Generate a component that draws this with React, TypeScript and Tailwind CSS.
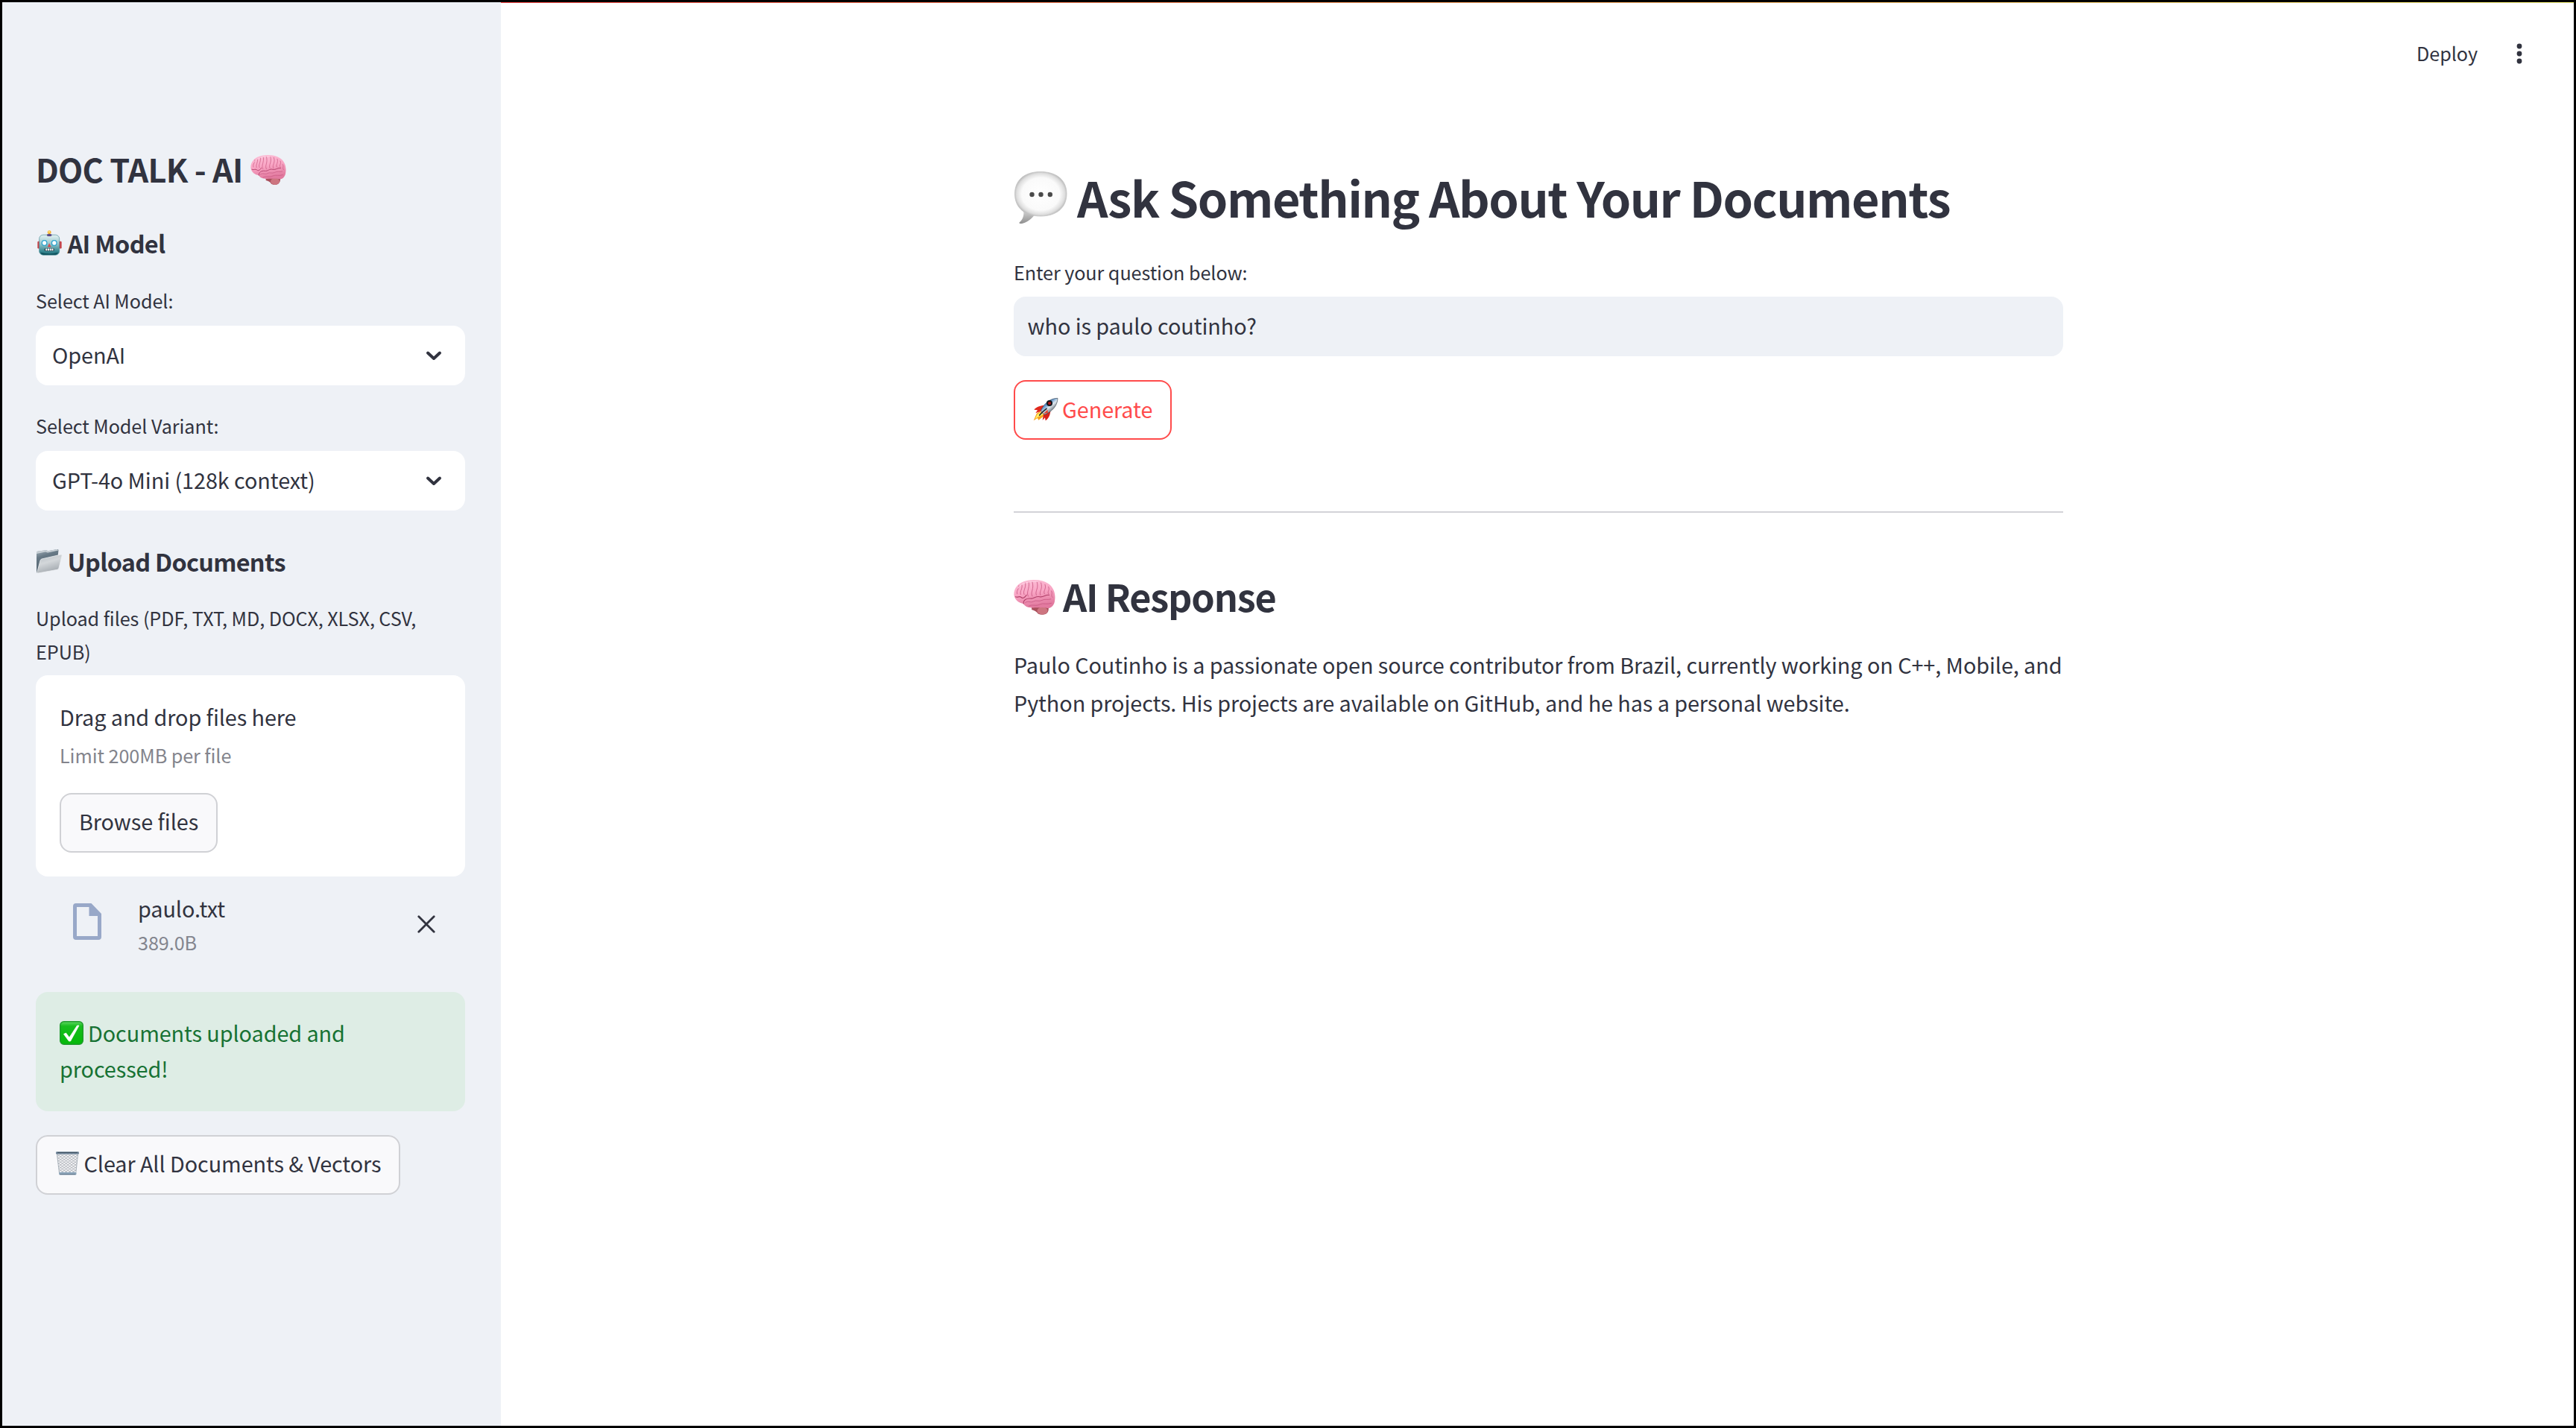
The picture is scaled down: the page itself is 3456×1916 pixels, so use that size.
import React from "react";

function Brain({ id, className }: { id: string; className: string }) {
  return (
    <svg viewBox="48 54 144 120" preserveAspectRatio="none" className={className}>
      <defs>
        <linearGradient id={id} x1="0" y1="0" x2="0.25" y2="1">
          <stop offset="0" stopColor="#fcc0d8" />
          <stop offset="0.5" stopColor="#f9a6c5" />
          <stop offset="1" stopColor="#e27a9f" />
        </linearGradient>
      </defs>
      <path d="M110 146 Q140 142 168 148 Q170 163 160 170 Q146 177 132 170 Q126 160 110 156Z" fill="#a94f5c" />
      <ellipse cx="147" cy="160" rx="18" ry="13" fill="#cd7580" />
      <path
        d="M49 106 C48 84 62 66 84 59 C108 51 146 52 166 66 C184 77 193 98 190 122 C189 140 178 152 164 151 C150 146 136 150 122 149 C106 151 88 149 82 136 C66 134 52 124 49 106Z"
        fill={`url(#${id})`}
      />
      <g fill="none" stroke="#b04069" strokeWidth="2.8" strokeLinecap="round" strokeLinejoin="round">
        <path d="M82 136 C80 124 92 116 106 118 C118 120 124 108 138 112 C150 115 158 104 170 106" />
        <path d="M54 112 C62 116 68 108 74 114 C80 120 88 112 92 106" />
      </g>
      <g fill="none" stroke="#c95a84" strokeWidth="2.2" strokeLinecap="round" strokeLinejoin="round">
        <path d="M88 132 C98 124 106 134 116 128 C126 122 134 130 146 124 C156 118 164 124 176 120" />
        <path d="M100 144 C112 136 124 146 138 138 C150 132 162 140 178 134" />
        <path d="M60 102 C56 88 68 86 66 74" />
        <path d="M72 104 C68 92 80 84 76 70" />
        <path d="M84 104 C78 92 92 82 88 64" />
        <path d="M98 110 C90 96 104 84 100 62" />
        <path d="M112 110 C104 94 120 88 112 60" />
        <path d="M126 106 C120 92 136 84 128 60" />
        <path d="M140 106 C134 94 150 86 142 64" />
        <path d="M154 102 C148 92 162 86 156 70" />
        <path d="M168 102 C162 94 174 90 168 78" />
        <path d="M182 114 C174 106 184 102 178 92" />
      </g>
      <path d="M64 82 C72 66 100 58 130 60" fill="none" stroke="#ffdbe9" strokeWidth="3" strokeLinecap="round" opacity="0.7" />
    </svg>
  );
}

function Robot() {
  return (
    <svg viewBox="17 24 100 102" className="h-[34px] w-[33px]">
      <defs>
        <linearGradient id="head" x1="0" y1="0" x2="0" y2="1">
          <stop offset="0" stopColor="#e4f1f2" />
          <stop offset="0.4" stopColor="#a0cbd0" />
          <stop offset="0.8" stopColor="#3a8a94" />
          <stop offset="1" stopColor="#1d6b76" />
        </linearGradient>
      </defs>
      <rect x="18" y="68" width="12" height="30" rx="4" fill="#c8434a" />
      <rect x="104" y="68" width="12" height="30" rx="4" fill="#c8434a" />
      <circle cx="66" cy="32" r="7.5" fill="#f9b32c" />
      <circle cx="65" cy="30" r="3.5" fill="#ffe680" />
      <rect x="25" y="42" width="82" height="82" rx="16" fill="url(#head)" stroke="#4b8c95" strokeWidth="2" />
      <ellipse cx="66" cy="43" rx="10" ry="5" fill="#5b4a86" />
      <path d="M31 114 Q66 124 101 114 Q98 123 88 123 H44 Q34 123 31 114Z" fill="#0f515c" />
      <circle cx="46" cy="75" r="12" fill="#2ba5cf" />
      <circle cx="86" cy="75" r="12" fill="#2ba5cf" />
      <circle cx="46" cy="75" r="8" fill="#fff" />
      <circle cx="86" cy="75" r="8" fill="#fff" />
      <path d="M66 76 L73 92 H59Z" fill="#d9484c" />
      <rect x="46" y="96" width="40" height="12" rx="5" fill="#2b4a55" />
      <path d="M51 102 H82" stroke="#fff" strokeWidth="8" strokeDasharray="6 2.3" />
    </svg>
  );
}

function Folder() {
  return (
    <svg viewBox="0 0 36 34" className="h-[34px] w-[36px]">
      <defs>
        <linearGradient id="fback" x1="0" y1="0" x2="0.3" y2="1">
          <stop offset="0" stopColor="#aab6bf" />
          <stop offset="0.35" stopColor="#677986" />
          <stop offset="1" stopColor="#4f606c" />
        </linearGradient>
        <linearGradient id="ffront" x1="0" y1="0" x2="0.4" y2="1">
          <stop offset="0" stopColor="#b4bbc1" />
          <stop offset="0.5" stopColor="#d3d7da" />
          <stop offset="1" stopColor="#a5abb1" />
        </linearGradient>
      </defs>
      <path d="M1 5 L1 31 Q1 33 3 32.5 L28 26 L30.5 2 Q30 0.5 28.5 1 L16.500 3.300 L14 2.200 L3 3.500 Q1 4 1 5Z" fill="url(#fback)" />
      <path d="M1 5 Q1 4 3 3.500 L14 2.200 L16.500 3.300 L28.500 1 L30.300 2.500 L16 5.500 L13 4.500 L1 7Z" fill="#c6ced4" />
      <path d="M8 14 L34 8 Q35.500 8 35 10 L31 26 Q30.500 28 29 28.300 L3 33 Q1.500 33 2 31 L6 16 Q6.500 14.500 8 14Z" fill="url(#ffront)" stroke="#edf0f2" strokeWidth="0.8" />
    </svg>
  );
}

function Bubble() {
  return (
    <svg viewBox="0 0 72 72" className="mt-[2px] h-[72px] w-[72px]">
      <defs>
        <radialGradient id="bub" cx="0.5" cy="0.5" r="0.54">
          <stop offset="0" stopColor="#ffffff" />
          <stop offset="0.68" stopColor="#fafafa" />
          <stop offset="0.86" stopColor="#dedede" />
          <stop offset="1" stopColor="#a8a8a8" />
        </radialGradient>
        <linearGradient id="tail" x1="0" y1="0" x2="0" y2="1">
          <stop offset="0" stopColor="#e0e0e0" />
          <stop offset="1" stopColor="#8f8f8f" />
        </linearGradient>
      </defs>
      <path d="M12 50 C15 58 13 65 7.500 69.500 C7 71 9 71.300 11 71 C18 69.500 24 65 29 58Z" fill="url(#tail)" />
      <path d="M36 1.500 C58 1.500 71 13 71 31 C71 50 57 61 36 61 C15 61 1.500 50 1.500 31 C1.500 13 14 1.500 36 1.500Z" fill="url(#bub)" stroke="#c4c4c4" strokeWidth="0.8" />
      <circle cx="24.500" cy="32" r="3.200" fill="#4a4a4a" />
      <circle cx="36.500" cy="32" r="3.200" fill="#4a4a4a" />
      <circle cx="48.800" cy="32" r="3.200" fill="#4a4a4a" />
    </svg>
  );
}

function Rocket() {
  return (
    <svg viewBox="28 22 102 96" className="h-[32px] w-[34px]">
      <defs>
        <linearGradient id="hull" x1="0.2" y1="0.1" x2="0.75" y2="0.75">
          <stop offset="0" stopColor="#2e5f9c" />
          <stop offset="0.35" stopColor="#5d94cc" />
          <stop offset="0.62" stopColor="#dfe7ee" />
          <stop offset="1" stopColor="#5d6670" />
        </linearGradient>
      </defs>
      <path d="M56 78 L42 88 L30 116 L46 106 L50 114 L76 94Z" fill="#f7a21b" />
      <path d="M56 82 L44 92 L36 110 L50 100 L70 92Z" fill="#fff06a" />
      <path d="M72 54 C56 56 42 60 32 72 L46 74 L38 86 L60 78Z" fill="#e1281c" />
      <path d="M98 78 C96 94 92 106 78 116 L76 104 L66 114 L70 90Z" fill="#d8231a" />
      <path d="M127 26 C100 26 76 42 60 74 C62 82 68 90 76 92 C106 78 126 56 127 26Z" fill="url(#hull)" stroke="#3d4854" strokeWidth="2" />
      <path d="M82 68 C72 76 62 84 54 94" stroke="#23272c" strokeWidth="5" strokeLinecap="round" fill="none" />
      <path d="M86 72 L70 88 L88 84Z" fill="#e9402c" />
      <circle cx="94" cy="46" r="12" fill="#14181d" />
      <circle cx="94" cy="46" r="6" fill="#b61717" />
    </svg>
  );
}

function CheckBadge() {
  return (
    <svg viewBox="0 0 32 32" className="h-[32px] w-[32px]">
      <defs>
        <linearGradient id="chk" x1="0" y1="0" x2="0" y2="1">
          <stop offset="0" stopColor="#5fd763" />
          <stop offset="0.2" stopColor="#17bd1e" />
          <stop offset="1" stopColor="#05b90a" />
        </linearGradient>
      </defs>
      <rect x="0.700" y="0.700" width="30.600" height="30.600" rx="5" fill="url(#chk)" stroke="#1f9a2c" strokeWidth="1.400" />
      <path d="M5.500 17.500 L8.500 16 L13 22 L23.500 6 H26 L14.500 27 H12.500Z" fill="#fff" stroke="#fff" strokeWidth="0.800" strokeLinejoin="round" />
    </svg>
  );
}

function Trash() {
  return (
    <svg viewBox="20 28 94 96" className="h-[32px] w-[31px]">
      <defs>
        <pattern id="mesh" x="24" y="38" width="15" height="11" patternUnits="userSpaceOnUse">
          <path d="M0 0 L15 11 M15 0 L0 11" stroke="#7d848e" strokeWidth="1.800" />
        </pattern>
      </defs>
      <path d="M24 36 H110 L101 118 H34Z" fill="#fbfbfc" />
      <path d="M24 36 H110 L101 118 H34Z" fill="url(#mesh)" stroke="#8a95a1" strokeWidth="2" />
      <rect x="20" y="28" width="94" height="10" rx="4" fill="#71869a" />
      <path d="M26 32 H108" stroke="#3f5060" strokeWidth="3" />
      <rect x="33" y="112" width="70" height="11" rx="4" fill="#8fa8bd" />
      <path d="M36 120 H100" stroke="#5f7488" strokeWidth="3" />
    </svg>
  );
}

function SelectField({ label, value, className }: { label: string; value: string; className: string }) {
  return (
    <div className={className}>
      <div className="text-[25.2px] leading-[44px]">{label}</div>
      <div className="mt-3 flex h-20 items-center justify-between rounded-2xl bg-white pl-[22px] pr-[30px]">
        <span className="pb-[3px] text-[28.800px] leading-[48px]">{value}</span>
        <svg viewBox="0 0 24 16" className="h-4 w-6" fill="none" stroke="#31333f" strokeWidth="4" strokeLinecap="round" strokeLinejoin="round">
          <path d="M4 4.500 L12 12 L20 4.500" />
        </svg>
      </div>
    </div>
  );
}

function Sidebar() {
  return (
    <aside className="w-[672px] shrink-0 bg-[#eef1f6] pl-12 pr-12 pt-[197px]">
      <h2 className="flex items-center text-[43.200px] font-bold leading-[58px] tracking-[-0.017em]">
        <span className="w-[288px]">DOC TALK - AI</span>
        <Brain id="brain-sm" className="mt-[3px] h-10 w-12" />
      </h2>

      <h3 className="mt-[49px] flex h-[43px] items-center text-[32.400px] font-bold leading-[43px] tracking-[-0.022em]">
        <span className="ml-[1.500px] mr-2"><Robot /></span>
        AI Model
      </h3>
      <SelectField className="mt-[34px]" label="Select AI Model:" value="OpenAI" />
      <SelectField className="mt-8" label="Select Model Variant:" value="GPT-4o Mini (128k context)" />

      <h3 className="mt-[46px] flex h-[43px] items-center text-[32.400px] font-bold leading-[43px] tracking-[-0.022em]">
        <span className="mr-[6.500px]"><Folder /></span>
        Upload Documents
      </h3>
      <p className="mt-[33px] whitespace-nowrap text-[25.200px] leading-[45px]">
        Upload files (PDF, TXT, MD, DOCX, XLSX, CSV,
        <br />
        EPUB)
      </p>

      <section className="mt-[9px] flex h-[270px] flex-col items-start rounded-2xl bg-white pl-8 pt-8">
        <div className="text-[28.800px] leading-[48px]">Drag and drop files here</div>
        <div className="mt-[5px] text-[25.200px] leading-[44px] text-[#83848c]">Limit 200MB per file</div>
        <button className="mt-[29px] flex h-20 w-[212px] items-center justify-center rounded-2xl border-2 border-[#d0d1d5] bg-[#f9f9fb] pb-[5px] text-[28.800px]">
          Browse files
        </button>
      </section>

      <div className="mt-[18px] flex h-[90px] items-start">
        <svg viewBox="0 0 38 49" className="ml-[50px] mt-[18px] h-[49px] w-[38px]">
          <path
            d="M4 0 H24.500 L38 14 V45 Q38 49 34 49 H4 Q0 49 0 45 V4 Q0 0 4 0Z M5 5 V44 H33 V17 H21.500 V5Z"
            fill="#98a8c8"
            fillRule="evenodd"
          />
        </svg>
        <div className="ml-[49px] flex-1">
          <div className="pt-px text-[28.800px] leading-[48px]">paulo.txt</div>
          <div className="mt-px text-[25.200px] leading-10 text-[#83858e]">389.0B</div>
        </div>
        <svg viewBox="0 0 24 24" className="mr-10 mt-[34px] h-6 w-6" stroke="#31333f" strokeWidth="2.800" strokeLinecap="round">
          <path d="M1.800 1.800 L22.200 22.200 M22.200 1.800 L1.800 22.200" />
        </svg>
      </div>

      <div className="mt-[47px] h-40 rounded-2xl bg-[#deede5] px-8 pt-[31px] text-[28.800px] leading-[48px] text-[#177233]">
        <div className="flex items-center">
          <span className="mr-1.5"><CheckBadge /></span>
          Documents uploaded and
        </div>
        processed!
      </div>

      <button className="mt-8 flex h-20 w-[489px] items-center rounded-2xl border-2 border-[#d0d1d5] bg-[#f9f9fb] pb-[5px] pl-[24.500px] text-[28.800px]">
        <span className="mr-[7px]"><Trash /></span>
        Clear All Documents &amp; Vectors
      </button>
    </aside>
  );
}

function Content() {
  return (
    <main className="flex-1 bg-white">
      <div className="h-1 bg-linear-to-r from-[#ff4b4b] to-[#fffd80]" />
      <header className="flex h-[136px] items-center justify-end gap-[50px] pr-[70px] text-[25.200px]">
        <span>Deploy</span>
        <svg viewBox="0 0 12 32" className="h-8 w-3" fill="#31333f">
          <circle cx="6" cy="6" r="3.400" />
          <circle cx="6" cy="16" r="3.400" />
          <circle cx="6" cy="26" r="3.400" />
        </svg>
      </header>

      <div className="mx-auto w-[1408px] pt-[81px]">
        <h1 className="flex h-[86px] items-center whitespace-nowrap text-[64.800px] font-bold leading-[86px] tracking-[-0.0225em]">
          <span className="mr-[13px]"><Bubble /></span>
          Ask Something About Your Documents
        </h1>
        <div className="mt-9 text-[25.200px] leading-[44px]">Enter your question below:</div>
        <div className="mt-[11px] flex h-20 items-center rounded-2xl bg-[#eef1f6] pb-[3px] pl-[18.500px] text-[28.800px]">
          who is paulo coutinho?
        </div>
        <button className="mt-8 flex h-20 w-[212px] items-center rounded-2xl border-2 border-[#ff4b4b] bg-white pb-[2px] pl-6 text-[28.800px] text-[#ff4b4b]">
          <span className="mr-[5px]"><Rocket /></span>
          Generate
        </button>
        <hr className="mt-24 h-0.5 border-0 bg-[#d3d3d8]" />
        <h2 className="mt-[78px] flex h-[68px] items-center whitespace-nowrap text-[50.400px] font-bold leading-[68px] tracking-[-0.024em]">
          <Brain id="brain-lg" className="mr-[10px] mt-[2px] h-[47px] w-14" />
          AI Response
        </h2>
        <p className="mt-8 whitespace-nowrap text-[28.800px] leading-[51px]">
          Paulo Coutinho is a passionate open source contributor from Brazil, currently working on C++, Mobile, and
          <br />
          Python projects. His projects are available on GitHub, and he has a personal website.
        </p>
      </div>
    </main>
  );
}

export default function App() {
  return (
    <div className="relative flex h-[1916px] w-[3456px] overflow-hidden font-['Noto_Sans_CJK_SC','Noto_Sans',sans-serif] tracking-[-0.075px] text-[#31333f] [&_button]:tracking-[-0.075px] [&_svg]:block">
      <Sidebar />
      <Content />
      <div className="pointer-events-none absolute inset-0 border-[3px] border-black" />
    </div>
  );
}
